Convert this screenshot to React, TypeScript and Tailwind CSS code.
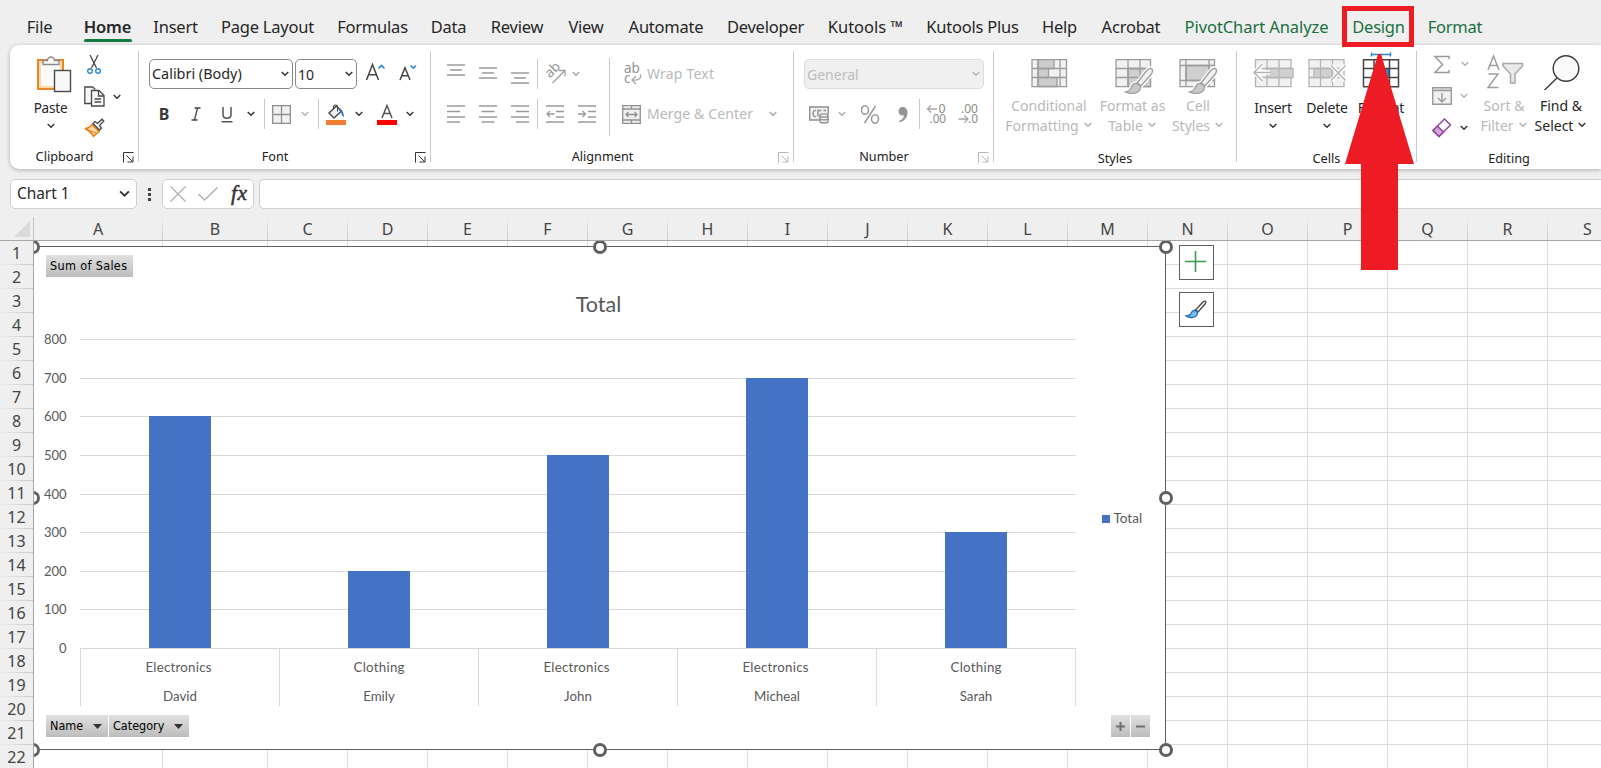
import type { ReactNode } from "react";
import clsx from "clsx";

type Tab = { label: string; w: string; kind?: "active" | "context" };

const TABS: Tab[] = [
  { label: "File", w: "w-[25px] mr-[32px]" },
  { label: "Home", w: "w-[47px] mr-[23px]", kind: "active" },
  { label: "Insert", w: "w-[43px] mr-[24px]" },
  { label: "Page Layout", w: "w-[93px] mr-[24px]" },
  { label: "Formulas", w: "w-[69px] mr-[24px]" },
  { label: "Data", w: "w-[35px] mr-[25px]" },
  { label: "Review", w: "w-[52px] mr-[25px]" },
  { label: "View", w: "w-[36px] mr-[24px]" },
  { label: "Automate", w: "w-[76px] mr-[23px]" },
  { label: "Developer", w: "w-[77px] mr-[24px]" },
  { label: "Kutools ™", w: "w-[75px] mr-[23px] tracking-[0px]" },
  { label: "Kutools Plus", w: "w-[93px] mr-[23px]" },
  { label: "Help", w: "w-[35px] mr-[24px]" },
  { label: "Acrobat", w: "w-[60px] mr-[24px]" },
  { label: "PivotChart Analyze", w: "w-[143px] mr-[25px] tracking-[-0.08px]", kind: "context" },
  { label: "Design", w: "w-[51px] mr-[24px]", kind: "context" },
  { label: "Format", w: "w-[54px]", kind: "context" },
];

const COLUMNS = "ABCDEFGHIJKLMNOPQRS".split("");
const ROWS = Array.from({ length: 22 }, (_, i) => i + 1);

const colWidth = (c: string) => (c === "A" ? "w-[129px]" : c === "B" ? "w-[105px]" : "w-[80px]");

const SALES = [
  { name: "David", category: "Electronics", total: 600 },
  { name: "Emily", category: "Clothing", total: 200 },
  { name: "John", category: "Electronics", total: 500 },
  { name: "Micheal", category: "Electronics", total: 700 },
  { name: "Sarah", category: "Clothing", total: 300 },
];

/* ---------- small shared pieces ---------- */

function Chevron({ className = "text-[#333]", big = false }: { className?: string; big?: boolean }) {
  return (
    <svg
      width={big ? 11 : 8}
      height={big ? 8 : 6}
      viewBox="0 0 8 6"
      fill="none"
      stroke="currentColor"
      strokeWidth={1.4}
      className={clsx("shrink-0", className)}
    >
      <path d="M.7 1 4 4.3 7.3 1" />
    </svg>
  );
}

function Cell({ w, children }: { w: string; children?: ReactNode }) {
  return <div className={clsx("flex shrink-0 items-center justify-center", w)}>{children}</div>;
}

function Sep({ className = "h-[30px]" }: { className?: string }) {
  return <div className={clsx("w-px shrink-0 bg-[#c8c8c8]", className)} />;
}

function Launcher({ disabled }: { disabled?: boolean }) {
  return (
    <svg width="11" height="11" viewBox="0 0 11 11" fill="none" stroke={disabled ? "#b5b5b5" : "#333"} className="mr-[4px] mt-[3px] shrink-0">
      <path d="M.5 10.5V.5h10M3.5 3.5l6 6M10 4.500v5.500H4.500" />
    </svg>
  );
}

type GroupProps = { label: string; w: string; launcher?: "on" | "off"; children: ReactNode };

function Group({ label, w, launcher, children }: GroupProps) {
  return (
    <section className={clsx("flex shrink-0", w)}>
      <div className="flex min-w-0 flex-1 flex-col">
        <div className="flex h-[100px]">{children}</div>
        <div className={clsx("flex items-center", launcher ? "h-[22px]" : "h-[24px] pt-[1px]")}>
          <span className={clsx("flex-1 text-center text-[12.7px] leading-[20px] text-[#222]", launcher && "pr-[4px]")}>{label}</span>
          {launcher && <Launcher disabled={launcher === "off"} />}
        </div>
      </div>
      <div className="mt-[6px] h-[111px] w-px bg-[#cbcbcb]" />
    </section>
  );
}

type BigButtonProps = { w: string; icon: ReactNode; lines: string[]; disabled?: boolean };

// Tall ribbon button: one label line puts the chevron below, two lines put it after the text
function BigButton({ w, icon, lines, disabled }: BigButtonProps) {
  const single = lines.length === 1;
  return (
    <div className={clsx("flex shrink-0 flex-col items-center whitespace-nowrap", w, disabled ? "text-[#b9b9b9]" : "text-[#262626]")}>
      <div className="flex h-[51px] items-start pt-[7px]">{icon}</div>
      <div className={clsx("text-[14px] leading-[20px]", single && "mt-[2px] tracking-[-0.2px]")}>{lines[0]}</div>
      {single ? (
        <Chevron className="mr-[1px] mt-[5px] text-[#333]" />
      ) : (
        <div className="flex items-center gap-[5px] pr-[1px] text-[14px] leading-[20px]">
          {lines[1]}
          <Chevron className={clsx("-mt-[2px]", disabled ? "text-[#b0b0b0]" : "text-[#333]")} />
        </div>
      )}
    </div>
  );
}

/* ---------- icons ---------- */

const PasteIcon = () => (
  <svg width="36" height="40" viewBox="0 0 36 40" fill="none">
    <rect x="2" y="6" width="25" height="29" fill="#fff" stroke="#e8862a" strokeWidth="2" />
    <rect x="4" y="8" width="21" height="25" fill="#fafafa" stroke="#fbd9a0" strokeWidth="2" />
    <path d="M7 10.500V6.500h4.500a3.500 3.500 0 0 1 7 0H23v4z" fill="#fafafa" stroke="#8a8a8a" strokeWidth="1.300" />
    <rect x="18.500" y="16.500" width="16" height="21" fill="#f8f8f8" stroke="#4a4a4a" strokeWidth="1.400" />
  </svg>
);

const CutIcon = () => (
  <svg width="14" height="21" viewBox="0 0 14 21" fill="none">
    <path d="M3 1l6.500 13M11 1 4.500 14" stroke="#444" strokeWidth="1.300" />
    <circle cx="3" cy="17" r="2.300" stroke="#2b88d0" strokeWidth="1.400" />
    <circle cx="11" cy="17" r="2.300" stroke="#2b88d0" strokeWidth="1.400" />
  </svg>
);

const CopyIcon = () => (
  <svg width="21" height="21" viewBox="0 0 21 21" fill="none" stroke="#4a4a4a" strokeWidth="1.300">
    <path d="M7 17.500H.800V1h8l2.500 2.500" fill="#f6f6f6" />
    <path d="M7.500 4.500h7.500l5 5v10.500H7.500z" fill="#f8f8f8" />
    <path d="M14.500 4.500v5.500H20M10.500 13h6.500M10.500 16h6.500" />
  </svg>
);

const PainterIcon = () => (
  <svg width="21" height="20" viewBox="0 0 21 20" fill="none">
    <path d="M8 6.500 15 13.500 9.500 18.500C7 14 4 12 1 10.500c3 0 5-1.500 7-4z" fill="#fbd9a0" stroke="#e8790d" strokeWidth="1.400" />
    <path d="M3.500 12 12 15" stroke="#e8790d" />
    <path d="m9 5.500 2-2 2.500 2 4.500-4.300 1.800 1.800L15.500 7.500l2 2.500-2 2z" fill="#f6f6f6" stroke="#444" strokeWidth="1.300" />
  </svg>
);

const GrowFont = ({ up }: { up?: boolean }) => (
  <svg width="22" height="22" viewBox="0 0 22 22" fill="none">
    <path
      d={up ? "M1.500 18 7.500 2.500 13.500 18M3.700 12.700h7.600" : "M2 18 7 5.800 12 18M3.800 13.800h6.400"}
      stroke="#444"
      strokeWidth="1.500"
    />
    <path d={up ? "M13.500 6.500 16.500 3.500 19.500 6.500" : "M12.500 3.500 15.300 6.200 18 3.500"} stroke="#2b88d0" strokeWidth="1.600" />
  </svg>
);

const BordersIcon = () => (
  <svg width="19" height="19" viewBox="0 0 19 19" fill="#f2f2f2" stroke="#8f8f8f" strokeWidth="1.300">
    <path d="M.700.700h17.600v17.600H.700zM9.500.700v17.600M.700 9.500h17.600" />
  </svg>
);

const FillIcon = () => (
  <svg width="20" height="21" viewBox="0 0 20 21" fill="none">
    <path d="M10.500 2 3 9l5 5 7.500-7z" fill="#f4f4f4" stroke="#444" strokeWidth="1.400" />
    <path d="M7.500 5V3a2 2 0 0 1 4 0v4.500" stroke="#444" strokeWidth="1.100" />
    <path d="M12.500 5.500c3-.5 5 1.500 5.500 7.500-2.500-1-2-4-3.500-5z" fill="#1e6fc0" />
    <rect y="16" width="20" height="5" fill="#ed7d31" />
  </svg>
);

const FontColorIcon = () => (
  <svg width="20" height="21" viewBox="0 0 20 21" fill="none">
    <path d="M5 14 10 1.500 15 14M6.800 9.500h6.400" stroke="#555" strokeWidth="1.500" />
    <rect y="16" width="20" height="5" fill="#f00" />
  </svg>
);

// Stack of horizontal strokes used by all the alignment buttons
function Lines({ d, h = 18 }: { d: string; h?: number }) {
  return (
    <svg width="18" height={h} viewBox={`0 0 18 ${h}`} fill="none" stroke="#9a9a9a" strokeWidth="1.300">
      <path d={d} />
    </svg>
  );
}

const OrientationIcon = () => (
  <svg width="22" height="22" viewBox="0 0 22 22" fill="none" stroke="#a0a0a0" strokeWidth="1.300" className="overflow-visible">
    <text x="0" y="0" transform="translate(6 15.500) rotate(-45)" fontSize="13.500" fill="#949494" stroke="none">
      ab
    </text>
    <path d="M8.500 20 20.500 8M15 7.500h6v6" />
  </svg>
);

const WrapIcon = () => (
  <svg width="18" height="22" viewBox="0 0 18 22" fill="none" stroke="#a6a6a6" strokeWidth="1.300" className="overflow-visible">
    <text x="0" y="10" fontSize="13.500" fill="#949494" stroke="none">ab</text>
    <text x="0" y="20" fontSize="13.500" fill="#949494" stroke="none">c</text>
    <path d="M16.500 11.500c.8 4-2 6-8 5.500M12 13l-4 4 4 4" />
  </svg>
);

const MergeIcon = () => (
  <svg width="19" height="19" viewBox="0 0 19 19" fill="none" stroke="#929292" strokeWidth="1.300">
    <path d="M.700.700h17.600v17.600H.700z" fill="#efefef" />
    <path d="M.700 4h17.600M.700 15h17.600M9.500.700V4M9.500 15v3.500M4 9.500h11M6.500 7 4 9.500 6.500 12M12.500 7 15 9.500 12.500 12" />
  </svg>
);

const MoneyIcon = () => (
  <svg width="20" height="18" viewBox="0 0 20 18" fill="none" stroke="#8f8f8f" strokeWidth="1.400">
    <path d="M11 14H.700V1h18.600v7" fill="#f0f0f0" />
    <path d="M7 4.500c-4-1-4 7 0 6M9 10.500v-6h3.500M14.500 4.500H17" />
    <path d="M11 9.500v6c0 2 8 2 8 0v-6" fill="#f4f4f4" />
    <ellipse cx="15" cy="9.500" rx="4" ry="1.600" fill="#f4f4f4" />
    <path d="M11 12.500c0 1.800 8 1.800 8 0" />
  </svg>
);

const DecimalIcon = ({ more }: { more?: boolean }) => (
  <svg width="21" height="22" viewBox="0 0 21 22" fill="none" stroke="#a6a6a6" strokeWidth="1.300" className="ml-[1px] overflow-visible">
    <text x={more ? 12.500 : 3} y="10" fontSize="12" textLength={more ? 7 : 17} lengthAdjust="spacingAndGlyphs" fill="#8c8c8c" stroke="none">
      {more ? "0" : ".00"}
    </text>
    <text x={more ? 3.500 : 10} y="20" fontSize="12" textLength={more ? 16.500 : 10} lengthAdjust="spacingAndGlyphs" fill="#8c8c8c" stroke="none">
      {more ? ".00" : ".0"}
    </text>
    <path d={more ? "M11 6H1.500M5 2.500 1.500 6 5 9.500" : "M.500 16H10M6.500 12.500 10 16 6.500 19.500"} />
  </svg>
);

const BRUSH = "M38 10c-2-1.500-4 0-6 2.500L23 24c1.500.5 3 2 3.500 3.500L37 15.500c1.500-2 2-4 1-5.500z";
const BRISTLE = "M22.500 24.500c-4-.5-5 3-6 5.500-1 1.800-2.500 2.500-5 3 5 2.500 14 2 15-4 .200-2-1.500-4-4-4.500z";

function GridIcon({ kind }: { kind: "cond" | "table" | "cell" }) {
  return (
    <svg width="40" height="36" viewBox="0 0 40 36" fill="none" stroke="#9c9c9c" strokeWidth="1.300" className={clsx(kind !== "cell" && "ml-[2px]")}>
      <path d="M2 .700h34.500v27H2z" fill="#f1f1f1" />
      {kind === "cond" && (
        <>
          <path d="M8 .700h16v8.800H8zM8 9.500h10.500v9H8zM8 18.500h19v9H8z" fill="#cdcdcd" />
          <path d="M2 9.500h34.500M2 18.500h34.500M30 .700v27M8 .700v27" />
        </>
      )}
      {kind === "table" && (
        <>
          <path d="M14 9.500h22.500v18H14z" fill="#cfcfcf" />
          <path d="M2 9.500h34.500M2 18.500h34.500M14 .700v27M26 .700v27" />
        </>
      )}
      {kind === "cell" && (
        <>
          <path d="M8 6.500h23v15H8z" fill="#cfcfcf" />
          <path d="M2 6.500h34.500M2 21.500h34.500M8 .700v27M31 .700v27" />
        </>
      )}
      {kind !== "cond" && (
        <>
          <path d={BRUSH} stroke="#fff" strokeWidth="4" />
          <path d={BRISTLE} stroke="#fff" strokeWidth="4" />
          <path d={BRUSH} fill="#f1f1f1" />
          <path d={BRISTLE} fill="#c8c8c8" />
        </>
      )}
    </svg>
  );
}

const InsertIcon = () => (
  <svg width="42" height="36" viewBox="0 0 42 36" fill="none" stroke="#b4b4b4" strokeWidth="1.300">
    <path d="M3.500.700H39v27H3.500z" fill="#f1f1f1" />
    <path d="M3.500 9.500H39M3.500 18.500H39M15 .700v27M27 .700v27" />
    <path d="M15 9.500h26v9H15z" fill="#d0d0d0" />
    <path d="M27 9.500v9" />
    <path d="M18 13.500H3M11 5 2.500 13.500 11 22" stroke="#fff" strokeWidth="4.500" />
    <path d="M18.500 13.500H2.500M10.500 5 2 13.500l8.500 8.500" stroke="#b4b4b4" strokeWidth="1.500" />
  </svg>
);

const DeleteIcon = () => (
  <svg width="40" height="36" viewBox="0 0 40 36" fill="none" stroke="#b4b4b4" strokeWidth="1.300">
    <path d="M2 .700h35v27H2z" fill="#f1f1f1" />
    <path d="M2 9.500h35M2 18.500h35M13.500.700v27M25.500.700v27" />
    <path d="M7 9.500h18v9H7z" fill="#d0d0d0" />
    <path d="M13.500 9.500v9" />
    <path d="m24.500 6.500 14 15M38.500 6.500l-14 15" stroke="#fff" strokeWidth="4.500" />
    <path d="m24 6.500 14.500 15M38.500 6.500 24 21.500" stroke="#b4b4b4" strokeWidth="1.500" />
  </svg>
);

const FormatIcon = () => (
  <svg width="38" height="36" viewBox="0 0 38 36" fill="none" stroke="#444" strokeWidth="1.500" className="overflow-visible">
    <path d="M1.500.700h35v27h-35z" fill="#fff" />
    <path d="M12 10h15v8H12z" fill="#2b88d8" stroke="none" />
    <path d="M1.500 9.500h35M1.500 18.500h35M12 .700v27M27.500.700v27" />
    <path d="M9.500-4.500h19M9.500-6.500v4M28.500-6.500v4" stroke="#2b88d8" />
  </svg>
);

const SigmaIcon = () => (
  <svg width="18" height="19" viewBox="0 0 18 19" fill="none" stroke="#9a9a9a" strokeWidth="1.500">
    <path d="M16 4V1.500H2L9.500 9.500 2 17.500h14V15" />
  </svg>
);

const FillDownIcon = () => (
  <svg width="20" height="18" viewBox="0 0 20 18" fill="none" stroke="#9a9a9a" strokeWidth="1.400">
    <path d="M.700.700h18.600v16.600H.700z" fill="#f1f1f1" />
    <path d="M.700 3.500h18.600M10 6v8.500M6 11l4 4 4-4" />
    <path d="M1.500 2.200h17" stroke="#c9c9c9" />
  </svg>
);

const EraserIcon = () => (
  <svg width="20" height="20" viewBox="0 0 20 20" fill="none" stroke="#8d3f9e" strokeWidth="1.400">
    <path d="m12.500 1 6 6L7 18.500 1 12.500z" fill="#fff" />
    <path d="m5.500 8 6 6L7 18.500 1 12.500z" fill="#d5a2dc" />
  </svg>
);

const SortFilterIcon = () => (
  <svg width="38" height="38" viewBox="0 0 38 38" fill="none" stroke="#9f9f9f" strokeWidth="1.500" className="ml-[2px]">
    <path d="M2 18 7.500 4 13 18M4 13.500h7M2.500 22h9.500L2 35.500h10.500" />
    <path d="M17 11.500h19.500v2.500l-7.500 8v9h-4.500v-9L17 14z" fill="#e9e9e9" stroke="#a8a8a8" />
  </svg>
);

const FindIcon = () => (
  <svg width="38" height="38" viewBox="0 0 38 38" fill="none" stroke="#3c3c3c" strokeWidth="1.400">
    <circle cx="24" cy="16.500" r="12.800" fill="#fafafa" />
    <path d="M15 26 1.500 39" />
  </svg>
);

/* ---------- ribbon ---------- */

function TabStrip() {
  return (
    <nav className="flex h-[45px] shrink-0 pl-[27px] pt-[16px] text-[16.5px] leading-[22px] tracking-[-0.22px]">
      {TABS.map((t) => (
        <div key={t.label} className={clsx("flex shrink-0 flex-col items-center whitespace-nowrap", t.w)}>
          <span className={clsx(t.kind === "active" && "font-semibold", t.kind === "context" ? "text-[#17703d]" : "text-[#262626]")}>
            {t.label}
          </span>
          {t.kind === "active" && <div className="mt-[1px] h-[3px] w-[48px] rounded-full bg-[#107c41]" />}
        </div>
      ))}
    </nav>
  );
}

function ClipboardGroup() {
  return (
    <Group label="Clipboard" w="w-[129px]" launcher="on">
      <div className="flex w-[60px] flex-col items-center pl-[21px] text-[#262626]">
        <div className="ml-[9px] flex h-[53px] w-[38px] shrink-0 items-start pt-[9px]">
          <PasteIcon />
        </div>
        <span className="text-[13.5px] leading-[20px] tracking-[-0.2px]">Paste</span>
        <Chevron className="mt-[5px] text-[#333]" />
      </div>
      <div className="flex flex-col pl-[14px] pt-[9px]">
        <div className="flex h-[32px] pl-[3px]">
          <CutIcon />
        </div>
        <div className="flex h-[32px] items-start gap-[8px]">
          <CopyIcon />
          <Chevron className="mt-[8px] text-[#333]" />
        </div>
        <PainterIcon />
      </div>
    </Group>
  );
}

function FontGroup() {
  return (
    <Group label="Font" w="w-[292px]" launcher="on">
      <div className="flex flex-col pt-[14px]">
        <div className="flex h-[30px] items-center pl-[10px]">
          <div className="flex h-[30px] w-[144px] items-center justify-between rounded-[5px] border border-[#8a8a8a] pl-[2px] pr-[3px] text-[14.4px] text-[#262626]">
            Calibri (Body)
            <Chevron />
          </div>
          <div className="ml-[2px] flex h-[30px] w-[62px] items-center justify-between rounded-[5px] border border-[#8a8a8a] pl-[2px] pr-[3px] text-[14px] text-[#262626]">
            10
            <Chevron />
          </div>
          <div className="ml-[8px] flex pb-[2px]">
            <GrowFont up />
          </div>
          <div className="ml-[11px] flex pb-[2px]">
            <GrowFont />
          </div>
        </div>
        <div className="mt-[10px] flex h-[30px] items-center pl-[9px] text-[#3a3a3a]">
          <Cell w="w-[32px] pb-[1px] text-[16px] font-bold">B</Cell>
          <Cell w="w-[32px]">
            <svg width="10" height="14" viewBox="0 0 10 14" fill="none" stroke="#444" strokeWidth="1.300">
              <path d="M3.500 1h6M.500 13h6M6.500 1l-3 12" />
            </svg>
          </Cell>
          <Cell w="w-[31px]">
            <svg width="12" height="17" viewBox="0 0 12 17" fill="none" stroke="#555" strokeWidth="1.500" className="mr-[1px] mt-[1px]">
              <path d="M2 1v7.500c0 5 8 5 8 0V1M.500 15.800h11" />
            </svg>
          </Cell>
          <Cell w="w-[16px]"><Chevron /></Cell>
          <Sep className="ml-[5px] h-[30px]" />
          <Cell w="w-[33px]"><BordersIcon /></Cell>
          <Cell w="w-[14px]"><Chevron className="text-[#b5b5b5]" /></Cell>
          <Sep className="ml-[6px] h-[30px]" />
          <Cell w="w-[34px]"><FillIcon /></Cell>
          <Cell w="w-[12px]"><Chevron /></Cell>
          <Cell w="w-[34px] ml-[5px]"><FontColorIcon /></Cell>
          <Cell w="w-[12px]"><Chevron /></Cell>
        </div>
      </div>
    </Group>
  );
}

function AlignmentGroup() {
  return (
    <Group label="Alignment" w="w-[363px]" launcher="off">
      <div className="flex w-[178px] flex-col pt-[14px]">
        <div className="flex h-[30px] items-center pl-[9px]">
          <Cell w="w-[32px]"><Lines d="M0 6h18M3 11h12M0 16h18" h={30} /></Cell>
          <Cell w="w-[32px]"><Lines d="M0 9h18M3 14h12M0 19h18" h={30} /></Cell>
          <Cell w="w-[32px]"><Lines d="M0 14h18M3 19h12M0 24h18" h={30} /></Cell>
          <Sep className="ml-[1px] h-[30px]" />
          <Cell w="w-[34px]"><OrientationIcon /></Cell>
          <Cell w="w-[8px]"><Chevron className="text-[#a8a8a8]" /></Cell>
        </div>
        <div className="mt-[10px] flex h-[30px] items-center pl-[9px]">
          <Cell w="w-[32px]"><Lines d="M0 1h18M0 6.500h13M0 12h18M0 17h13" /></Cell>
          <Cell w="w-[32px]"><Lines d="M0 1h18M2.500 6.500h13M0 12h18M2.500 17h13" /></Cell>
          <Cell w="w-[32px]"><Lines d="M0 1h18M5 6.500h13M0 12h18M5 17h13" /></Cell>
          <Sep className="ml-[1px] h-[30px]" />
          <Cell w="w-[34px]"><Lines d="M0 1h18M10 6.500h8M10 12h8M0 17h18M8.500 9H1M4 6 1 9l3 3" /></Cell>
          <Cell w="w-[30px]"><Lines d="M0 1h18M10 6.500h8M10 12h8M0 17h18M0 9h7.500M4.500 6l3 3-3 3" /></Cell>
        </div>
      </div>
      <Sep className="mt-[13px] h-[78px]" />
      <div className="flex flex-col whitespace-nowrap pt-[14px] text-[14px] leading-[20px] text-[#b9b9b9]">
        <div className="flex h-[30px] items-center">
          <Cell w="w-[37px] pl-[9px]"><WrapIcon /></Cell>
          <span className="tracking-[0.2px]">Wrap Text</span>
        </div>
        <div className="mt-[10px] flex h-[30px] items-center">
          <Cell w="w-[37px] pl-[6px]"><MergeIcon /></Cell>
          <span className="w-[122px] tracking-[0.12px]">Merge &amp; Center</span>
          <Chevron className="text-[#a8a8a8]" />
        </div>
      </div>
    </Group>
  );
}

function NumberGroup() {
  return (
    <Group label="Number" w="w-[200px]" launcher="off">
      <div className="flex flex-col pt-[14px]">
        <div className="ml-[10px] flex h-[30px] w-[180px] items-center justify-between rounded-[5px] border border-[#dcdcdc] bg-[#f0f0f0] pl-[2px] pr-[3px] text-[14px] text-[#bdbdbd]">
          General
          <Chevron className="text-[#b5b5b5]" />
        </div>
        <div className="mt-[10px] flex h-[30px] items-center pl-[10px]">
          <Cell w="w-[30px] pt-[2px]"><MoneyIcon /></Cell>
          <Cell w="w-[16px]"><Chevron className="text-[#b0b0b0]" /></Cell>
          <Cell w="w-[32px] ml-[4px]">
            <svg width="20" height="19" viewBox="0 0 20 19" fill="none" stroke="#999" strokeWidth="1.500">
              <ellipse cx="5" cy="5" rx="3.500" ry="4.200" />
              <ellipse cx="15" cy="14" rx="3.500" ry="4.200" />
              <path d="M15.500 1 4.500 18" />
            </svg>
          </Cell>
          <Cell w="w-[33px]">
            <svg width="10" height="17" viewBox="0 0 10 17" fill="#959595">
              <path d="M4.500 1C7.500 1 9.500 3 9.500 6.500c0 5-3 8.500-8 9.700L1 15c3-1 4.800-3 5-5.700-3 1-5.500-1-5.500-4C.500 3 2.200 1 4.500 1z" />
            </svg>
          </Cell>
          <Sep />
          <Cell w="w-[32px]"><DecimalIcon more /></Cell>
          <Cell w="w-[32px]"><DecimalIcon /></Cell>
        </div>
      </div>
    </Group>
  );
}

function StylesGroup() {
  return (
    <Group label="Styles" w="w-[243px]">
      <div className="flex pl-[10px]">
        <BigButton w="w-[90px]" icon={<div className="pt-[7px]"><GridIcon kind="cond" /></div>} lines={["Conditional", "Formatting"]} disabled />
        <BigButton w="w-[77px]" icon={<div className="pt-[7px]"><GridIcon kind="table" /></div>} lines={["Format as", "Table"]} disabled />
        <BigButton w="w-[54px]" icon={<div className="pt-[7px]"><GridIcon kind="cell" /></div>} lines={["Cell", "Styles"]} disabled />
      </div>
    </Group>
  );
}

function CellsGroup() {
  return (
    <Group label="Cells" w="w-[180px]">
      <div className="flex pl-[9px]">
        <BigButton w="w-[54px]" icon={<div className="pt-[7px]"><InsertIcon /></div>} lines={["Insert"]} />
        <BigButton w="w-[54px]" icon={<div className="pt-[7px]"><DeleteIcon /></div>} lines={["Delete"]} />
        <BigButton w="w-[54px]" icon={<div className="pt-[7px]"><FormatIcon /></div>} lines={["Format"]} />
      </div>
    </Group>
  );
}

function EditingGroup() {
  return (
    <Group label="Editing" w="w-[185px]">
      <div className="flex w-[60px] flex-col pl-[9px] pt-[9px]">
        <div className="flex h-[20px] items-center">
          <Cell w="w-[32px]"><SigmaIcon /></Cell>
          <Cell w="w-[14px]"><Chevron className="text-[#b0b0b0]" /></Cell>
        </div>
        <div className="mt-[12px] flex h-[20px] items-center">
          <Cell w="w-[32px]"><FillDownIcon /></Cell>
          <Cell w="w-[12px]"><Chevron className="text-[#b0b0b0]" /></Cell>
        </div>
        <div className="mt-[12px] flex h-[20px] items-center">
          <Cell w="w-[32px]"><EraserIcon /></Cell>
          <Cell w="w-[12px]"><Chevron /></Cell>
        </div>
      </div>
      <BigButton w="w-[54px]" icon={<SortFilterIcon />} lines={["Sort &", "Filter"]} disabled />
      <BigButton w="w-[60px]" icon={<FindIcon />} lines={["Find &", "Select"]} />
    </Group>
  );
}

function Ribbon() {
  return (
    <div className="ml-[10px] flex h-[124px] shrink-0 rounded-l-[9px] bg-white shadow-[0_1px_4px_rgba(0,0,0,0.28)]">
      <ClipboardGroup />
      <FontGroup />
      <AlignmentGroup />
      <NumberGroup />
      <StylesGroup />
      <CellsGroup />
      <EditingGroup />
    </div>
  );
}

function FormulaBar() {
  return (
    <div className="mt-[10px] flex h-[30px] shrink-0 items-center pl-[10px]">
      <div className="flex h-[30px] w-[127px] items-center justify-between rounded-[5px] border border-[#cfcfcf] bg-white pl-[6px] pr-[6px] text-[15.4px] text-[#262626]">
        Chart 1
        <Chevron big />
      </div>
      <div className="ml-[11px] flex w-[3px] flex-col gap-[2px]">
        <div className="h-[3px] w-[3px] bg-[#444]" />
        <div className="h-[3px] w-[3px] bg-[#444]" />
        <div className="h-[3px] w-[3px] bg-[#444]" />
      </div>
      <div className="ml-[11px] flex h-[30px] w-[92px] items-center rounded-[5px] border border-[#cfcfcf] bg-white pl-[7px]">
        <svg width="16" height="16" viewBox="0 0 16 16" fill="none" stroke="#b0b0b0" strokeWidth="1.300">
          <path d="M.500.500l15 15M15.500.500l-15 15" />
        </svg>
        <svg width="20" height="14" viewBox="0 0 20 14" fill="none" stroke="#b0b0b0" strokeWidth="1.400" className="ml-[12px]">
          <path d="M.500 7 6.500 13 19.500.500" />
        </svg>
        <span className="ml-[13px] -mt-[3px] font-['Liberation_Serif',serif] text-[21.5px] italic leading-[24px] tracking-[0.6px] text-[#333] [-webkit-text-stroke:0.5px_#333]">
          fx
        </span>
      </div>
      <div className="ml-[5px] h-[30px] flex-1 rounded-l-[5px] border border-r-0 border-[#cfcfcf] bg-white" />
    </div>
  );
}

/* ---------- worksheet ---------- */

const PLOT = { left: 46, right: 1041, bottom: 407 };
// gridline positions for 0, 100, ... 800
const GRID_Y = [407, 368, 330, 291, 253, 214, 175, 137, 98];

function PivotPlot() {
  const step = (PLOT.right - PLOT.left) / SALES.length;
  return (
    <svg width="1130" height="508" viewBox="0 0 1130 508" className="block font-[Lato,sans-serif]" fill="#595959" fontSize="13.300">
      <text x="564.500" y="71" fontSize="21.500" textAnchor="middle">Total</text>
      {GRID_Y.map((y, i) => (
        <g key={y}>
          <rect x={PLOT.left} y={y} width={PLOT.right - PLOT.left + 1} height="1" fill="#d9d9d9" />
          <text x="32.500" y={y + 5} fontSize="13" textAnchor="end">{i * 100}</text>
        </g>
      ))}
      {SALES.map((s, i) => {
        const x = PLOT.left + i * step;
        const y = GRID_Y[s.total / 100];
        const wide = s.category === "Electronics";
        return (
          <g key={s.name} textAnchor="middle">
            <rect x={x + 69} y={y} width="62" height={PLOT.bottom - y} fill="#4472c4" />
            <rect x={x} y={PLOT.bottom} width="1" height="58" fill="#d9d9d9" />
            <text x={x + (wide ? 98.500 : 100)} y="431" textLength={wide ? 66 : 51}>{s.category}</text>
            <text x={x + 100} y="460">{s.name}</text>
          </g>
        );
      })}
      <rect x={PLOT.right} y={PLOT.bottom} width="1" height="58" fill="#d9d9d9" />
      <rect x="1068" y="274" width="8" height="8" fill="#4472c4" />
      <text x="1079.500" y="282" fontSize="13.500">Total</text>
    </svg>
  );
}

const FIELD =
  "flex h-[22px] items-center bg-gradient-to-b from-[#e0e0e0] to-[#bdbdbd] font-['DejaVu_Sans_Condensed','DejaVu_Sans',sans-serif] text-[12.5px] text-black";

const Triangle = () => (
  <svg width="9" height="5" viewBox="0 0 9 5" fill="#333"><path d="M0 0h9L4.500 5z" /></svg>
);

function Handle({ className }: { className: string }) {
  return <div className={clsx("absolute h-[14px] w-[14px] rounded-full border-[3px] border-[#606060] bg-white", className)} />;
}

function PivotChart() {
  return (
    <div className="absolute -left-[2px] top-[5px] h-[504px] w-[1134px] border border-[#606060] bg-white">
      {/* plot shares the sheet's origin, so pull it back over the frame */}
      <div className="-mt-[6px] ml-[1px] h-[508px]">
        <PivotPlot />
      </div>
      <div className={clsx(FIELD, "absolute left-[13px] top-[8px] w-[87px] pl-[4px] tracking-[0.35px]")}>Sum of Sales</div>
      <div className="absolute left-[13px] top-[468px] flex gap-px">
        <div className={clsx(FIELD, "w-[62px] justify-between pl-[4px] pr-[6px]")}>Name<Triangle /></div>
        <div className={clsx(FIELD, "w-[80px] justify-between pl-[4px] pr-[6px]")}>Category<Triangle /></div>
      </div>
      <div className="absolute left-[1078px] top-[468px] flex gap-px">
        <div className={clsx(FIELD, "w-[19px] justify-center")}>
          <svg width="9" height="9" viewBox="0 0 9 9" stroke="#6e6e6e" strokeWidth="2"><path d="M0 4.500h9M4.500 0v9" /></svg>
        </div>
        <div className={clsx(FIELD, "w-[19px] justify-center")}>
          <svg width="9" height="9" viewBox="0 0 9 9" stroke="#6e6e6e" strokeWidth="2"><path d="M0 4.500h9" /></svg>
        </div>
      </div>
      <Handle className="-left-[7px] -top-[7px]" />
      <Handle className="left-[560px] -top-[7px]" />
      <Handle className="-right-[8px] -top-[7px]" />
      <Handle className="-left-[7px] top-[244px]" />
      <Handle className="-right-[8px] top-[244px]" />
      <Handle className="-left-[7px] -bottom-[8px]" />
      <Handle className="left-[560px] -bottom-[8px]" />
      <Handle className="-right-[8px] -bottom-[8px]" />
    </div>
  );
}

function ChartTools() {
  return (
    <div className="absolute left-[1145px] top-[4px] flex flex-col gap-[12px]">
      <div className="flex h-[35px] w-[35px] items-center justify-center border border-[#606060] bg-white">
        <svg width="21" height="21" viewBox="0 0 21 21" stroke="#3a9a52" strokeWidth="1.600" className="mb-[2px] mr-[2px]">
          <path d="M0 10.500h21M10.500 0v21" />
        </svg>
      </div>
      <div className="flex h-[35px] w-[35px] items-center justify-center border border-[#606060] bg-white">
        <svg width="22" height="19" viewBox="0 0 22 19" fill="none" strokeWidth="1.300" className="mr-[2px]">
          <path d="M20.500 1.500c-1-.8-2 0-3 1L10.500 10c1 .3 2 1.300 2.300 2.300L20 4c.8-1 1-1.800.500-2.500z" fill="#fff" stroke="#444" />
          <path d="M10 10.500c-2.500-.5-3.500 1.500-4.200 3.300C5 15.500 3.500 16 1 16c3.500 2.500 11 2 11.500-3 0-1-1-2.200-2.500-2.500z" fill="#7cc0f5" stroke="#1e6fb8" />
        </svg>
      </div>
    </div>
  );
}

function Sheet() {
  return (
    <div className="mt-[8px] flex min-h-0 flex-1 flex-col text-[16px] leading-[24px] text-[#444]">
      <div className="flex h-[24px] shrink-0 border-b border-[#a6a6a6]">
        <div className="flex w-[34px] shrink-0 items-end justify-end border-r border-[#c4c4c4] pb-[3px] pr-[3px]">
          <svg width="16" height="16" viewBox="0 0 16 16" fill="#dadada"><path d="M16 0v16H0z" /></svg>
        </div>
        {COLUMNS.map((c) => (
          <div key={c} className={clsx("flex shrink-0", colWidth(c))}>
            <span className="flex-1 text-center">{c}</span>
            <div className="w-px bg-gradient-to-b from-transparent to-[#c8c8c8]" />
          </div>
        ))}
      </div>
      <div className="flex min-h-0 flex-1">
        <div className="flex w-[34px] shrink-0 flex-col border-r border-[#a6a6a6]">
          {ROWS.map((r) => (
            <div key={r} className="flex h-[24px] shrink-0 flex-col">
              <span className="h-[23px] text-center">{r}</span>
              <div className="h-px bg-gradient-to-r from-transparent to-[#c8c8c8]" />
            </div>
          ))}
        </div>
        <div className="relative flex-1 overflow-hidden bg-white">
          {ROWS.map((r) => (
            <div key={r} className="flex h-[24px]">
              {COLUMNS.map((c) => (
                <div key={c} className={clsx("shrink-0 border-b border-r border-[#dcdcdc]", colWidth(c))} />
              ))}
            </div>
          ))}
          <PivotChart />
          <ChartTools />
        </div>
      </div>
    </div>
  );
}

// Red box round the Design tab and the arrow pointing up at it
function Callout() {
  return (
    <>
      <div className="absolute left-[1342px] top-[6px] h-[41px] w-[72px] border-[5px] border-[#ed1c24]" />
      <svg width="70" height="217" viewBox="0 0 70 217" fill="#ed1c24" className="absolute left-[1345px] top-[54px]">
        <path d="M33 0h3l33 110H53v106H16V110H0z" />
      </svg>
    </>
  );
}

export default function App() {
  return (
    <div className="relative flex h-[768px] w-[1601px] flex-col overflow-hidden bg-[#efefef] font-['Noto_Sans','Open_Sans',sans-serif]">
      <TabStrip />
      <Ribbon />
      <FormulaBar />
      <Sheet />
      <Callout />
    </div>
  );
}
